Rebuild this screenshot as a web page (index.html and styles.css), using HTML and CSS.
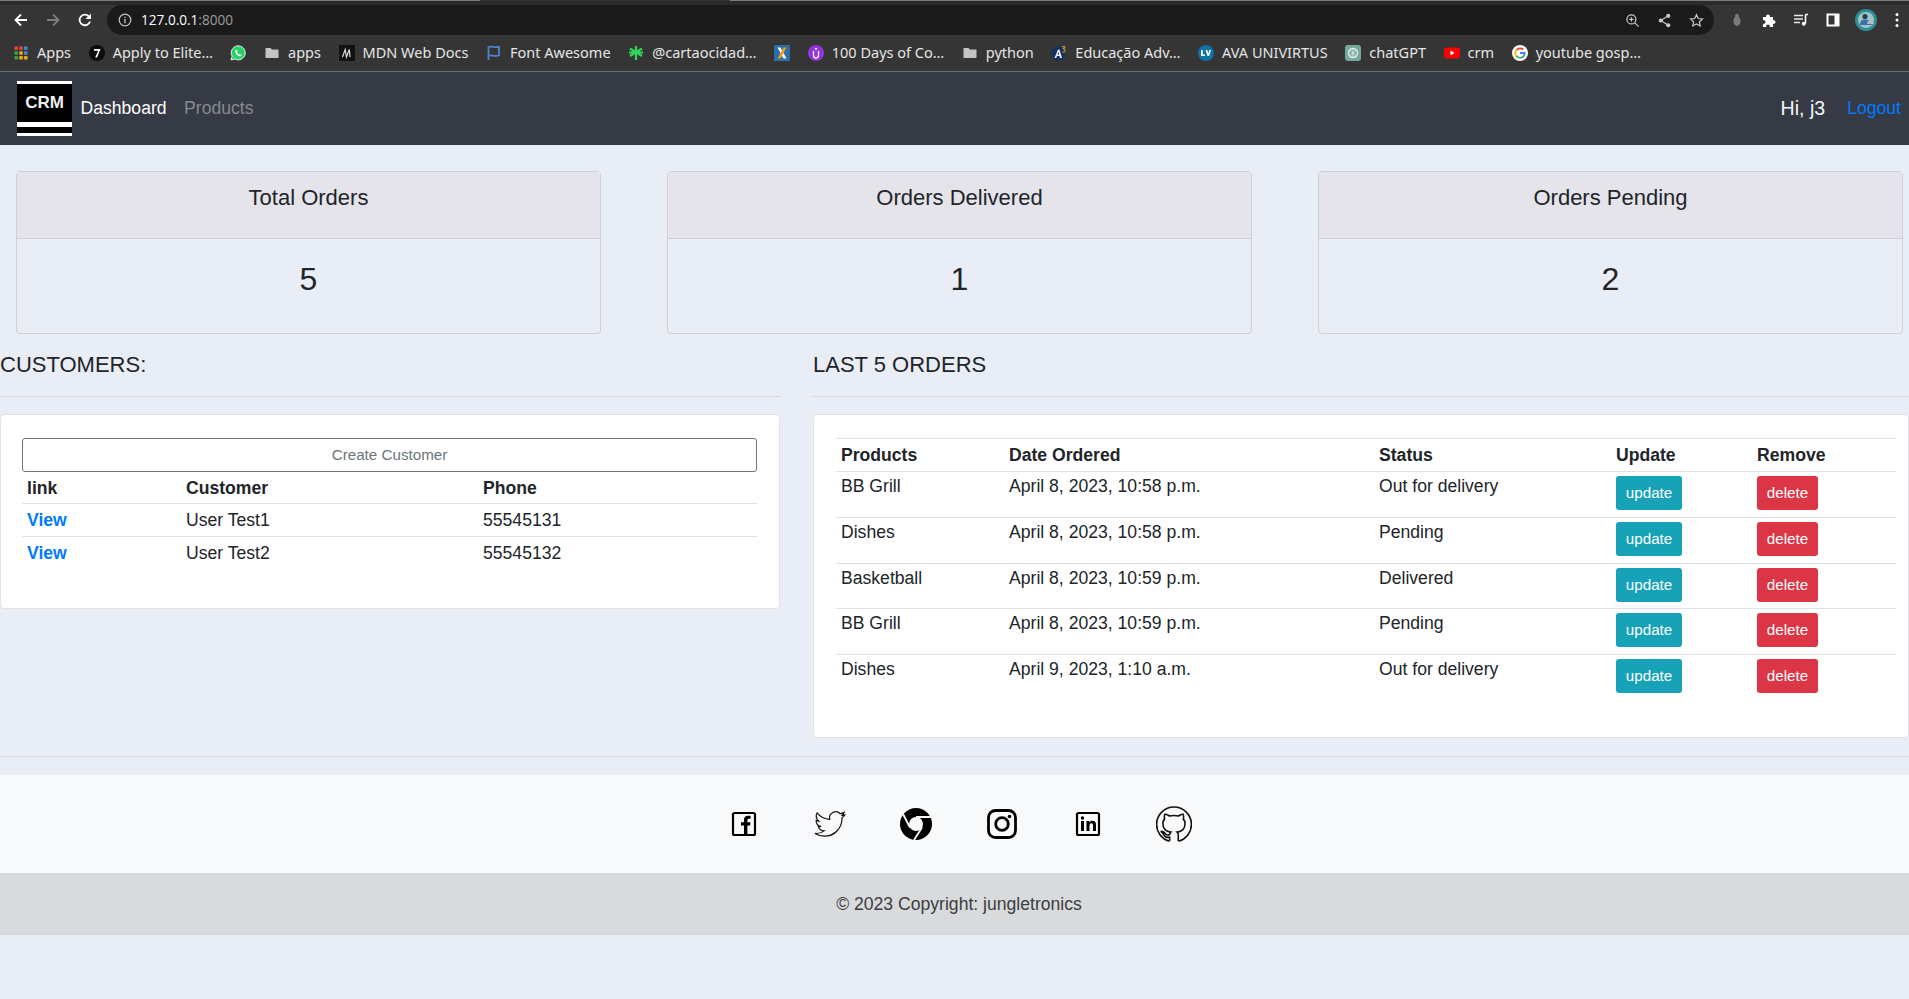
FILE: index.html
```html
<!DOCTYPE html>
<html lang="en">

  <head>
    <meta charset="UTF-8">
    <meta name="viewport" content="width=device-width, initial-scale=1.0">
    <title>CRM</title>
    <link rel="stylesheet" href="styles.css">
  </head>

  <body>
    <!-- browser window chrome -->
    <div class="tab-edge">
      <span class="edge-left"></span>
      <span class="edge-gap"></span>
      <span class="edge-right"></span>
    </div>
    <div class="toolbar">
      <div class="tool-buttons">
        <svg class="tool" viewBox="0 0 16 16"><path d="M14 8H3M8 2.500 2.500 8 8 13.500" fill="none" stroke="#fff" stroke-width="1.800"/></svg>
        <svg class="tool" viewBox="0 0 16 16"><path d="M2 8h11M8 2.500 13.500 8 8 13.500" fill="none" stroke="#7d7d7d" stroke-width="1.800"/></svg>
        <svg class="tool" viewBox="0 0 16 16"><path d="M13 9.500A5.300 5.300 0 1 1 11.800 4.300" fill="none" stroke="#fff" stroke-width="1.800"/><path d="M14 1.500V7H8.500z" fill="#fff"/></svg>
      </div>
      <div class="omnibox">
        <svg class="info" viewBox="0 0 14 14"><circle cx="7" cy="7" r="5.800" fill="none" stroke="#c8c8c8" stroke-width="1.200"/><path d="M7 6v4.200M7 3.800v1.200" stroke="#c8c8c8" stroke-width="1.300"/></svg>
        <span class="url">127.0.0.1<span class="url-port">:8000</span></span>
        <div class="omni-icons">
          <svg class="omni-icon" viewBox="0 0 16 16"><circle cx="6.800" cy="6.800" r="4.800" fill="none" stroke="#c8c8c8" stroke-width="1.300"/><path d="M10.300 10.300 14.500 14.500M4.500 6.800h4.600M6.800 4.500v4.600" stroke="#c8c8c8" stroke-width="1.300"/></svg>
          <svg class="omni-icon" viewBox="0 0 16 16"><path d="M12 3 4 8l8 5" fill="none" stroke="#c8c8c8" stroke-width="1.200"/><circle cx="12" cy="3" r="2.200" fill="#c8c8c8"/><circle cx="4" cy="8" r="2.200" fill="#c8c8c8"/><circle cx="12" cy="13" r="2.200" fill="#c8c8c8"/></svg>
          <svg class="omni-icon" viewBox="0 0 16 16"><path d="m8 1.800 1.900 4.100 4.500.5-3.300 3 .9 4.400L8 11.600l-4 2.200.9-4.400-3.300-3 4.500-.5z" fill="none" stroke="#c8c8c8" stroke-width="1.300"/></svg>
        </div>
      </div>
      <div class="ext-buttons">
        <svg class="ext-icon" viewBox="0 0 16 16"><ellipse cx="8" cy="9" rx="3.500" ry="5" fill="#7b7b7b"/><circle cx="8" cy="3.500" r="1.800" fill="#7b7b7b"/></svg>
        <svg class="ext-icon" viewBox="0 0 16 16"><path d="M2 5h3.200a1.900 1.900 0 1 1 3.600 0H12v3.200a1.900 1.900 0 1 1 0 3.600V15H8.800a1.900 1.900 0 1 0-3.600 0H2v-3.200a1.900 1.900 0 1 0 0-3.600z" fill="#fff"/></svg>
        <svg class="ext-icon" viewBox="0 0 16 16"><path d="M1 3.500h9M1 7h9M1 10.500h6" stroke="#e8e8e8" stroke-width="1.400"/><path d="M12.500 2.500v9" stroke="#fff" stroke-width="1.500"/><circle cx="10.800" cy="11.800" r="2" fill="#fff"/><path d="M12.500 2.500H15" stroke="#fff" stroke-width="1.500"/></svg>
        <svg class="ext-icon" viewBox="0 0 16 16"><rect x="1.500" y="1.500" width="13" height="13" fill="#fff"/><rect x="3.500" y="3.500" width="6" height="9" fill="#353535"/></svg>
        <svg class="avatar" viewBox="0 0 22 22"><circle cx="11" cy="11" r="11" fill="#2f8d95"/><circle cx="11" cy="11" r="8" fill="#9cc7c9"/><circle cx="10" cy="7.500" r="2.600" fill="#27424d"/><path d="M4.500 16c1-4.500 3-5.500 5.500-5.500s5 1 7 5.500z" fill="#3b73a8"/><path d="M12 15h7l-1-3h-5z" fill="#b9b9b9"/></svg>
        <svg class="menu-dots" viewBox="0 0 4 16"><circle cx="2" cy="2.500" r="1.500" fill="#fff"/><circle cx="2" cy="8" r="1.500" fill="#fff"/><circle cx="2" cy="13.500" r="1.500" fill="#fff"/></svg>
      </div>
    </div>
    <div class="bookmarks">
      <div class="bookmark">
        <svg class="bm-icon" viewBox="0 0 16 16">
          <rect x="1.500" y="1.500" width="3.400" height="3.400" fill="#e8453c"/><rect x="6.300" y="1.500" width="3.400" height="3.400" fill="#e8453c"/><rect x="11.100" y="1.500" width="3.400" height="3.400" fill="#4a89dc"/>
          <rect x="1.500" y="6.300" width="3.400" height="3.400" fill="#34a853"/><rect x="6.300" y="6.300" width="3.400" height="3.400" fill="#f4b400"/><rect x="11.100" y="6.300" width="3.400" height="3.400" fill="#4a89dc"/>
          <rect x="1.500" y="11.100" width="3.400" height="3.400" fill="#34a853"/><rect x="6.300" y="11.100" width="3.400" height="3.400" fill="#f4b400"/><rect x="11.100" y="11.100" width="3.400" height="3.400" fill="#f4b400"/>
        </svg>
        <span>Apps</span>
      </div>
      <div class="bookmark">
        <svg class="bm-icon" viewBox="0 0 16 16"><circle cx="8" cy="8" r="8" fill="#0c0c0c"/><path d="M5 4h6.500L8 12.500H6.200l3-6.700H5z" fill="#fff"/></svg>
        <span>Apply to Elite…</span>
      </div>
      <div class="bookmark">
        <svg class="bm-icon" viewBox="0 0 16 16"><path d="M1 15l1.100-3.800A7 7 0 1 1 4.900 14z" fill="#25d366" stroke="#fff" stroke-width=".9"/><path d="M5.800 4.600c-.8.700-1 1.900-.2 3.300.9 1.600 2.300 2.900 4 3.400 1 .2 1.900-.3 2.100-1.200l-1.700-1-.8.700c-.9-.4-1.600-1.100-2.100-2l.6-.9-.8-1.900z" fill="#fff"/></svg>
      </div>
      <div class="bookmark">
        <svg class="bm-icon" viewBox="0 0 16 16"><path d="M1.500 3h5l1.500 1.600h6.500V13h-13z" fill="#c4c4c4"/></svg>
        <span>apps</span>
      </div>
      <div class="bookmark">
        <svg class="bm-icon" viewBox="0 0 16 16"><rect width="16" height="16" fill="#111"/><path d="M3.500 12 6.200 4.500 7.500 12l2.800-7.500.7 7.500" fill="none" stroke="#ddd" stroke-width="1.200"/></svg>
        <span>MDN Web Docs</span>
      </div>
      <div class="bookmark">
        <svg class="bm-icon" viewBox="0 0 16 16"><path d="M2.500 15V2c3-1.500 5 1 10.500 0v8.500c-5 1.500-7.500-1-9.500.3" fill="none" stroke="#4a86cf" stroke-width="1.800"/></svg>
        <span>Font Awesome</span>
      </div>
      <div class="bookmark">
        <svg class="bm-icon" viewBox="0 0 16 16"><path d="M8 1v14M2 3.500l12 7.500M14 3.500 2 11M1 7.500h14" stroke="#33d45a" stroke-width="2.200"/></svg>
        <span>@cartaocidad…</span>
      </div>
      <div class="bookmark">
        <svg class="bm-icon" viewBox="0 0 16 16"><rect width="16" height="16" fill="#2a6fa8"/><path d="M3.500 2.500h3l6 11h-3z" fill="#fff"/><path d="M12.500 2.500h-3l-6 11h3z" fill="#f39a1e"/></svg>
      </div>
      <div class="bookmark">
        <svg class="bm-icon" viewBox="0 0 16 16"><circle cx="8" cy="8" r="8" fill="#9333dd"/><path d="M5.500 6v4.500a2.500 2.500 0 0 0 5 0V6" fill="none" stroke="#fff" stroke-width="1.300"/><circle cx="8" cy="3.800" r="1.100" fill="#fff"/></svg>
        <span>100 Days of Co…</span>
      </div>
      <div class="bookmark">
        <svg class="bm-icon" viewBox="0 0 16 16"><path d="M1.500 3h5l1.500 1.600h6.500V13h-13z" fill="#c4c4c4"/></svg>
        <span>python</span>
      </div>
      <div class="bookmark">
        <svg class="bm-icon" viewBox="0 0 16 16"><circle cx="7.500" cy="8.500" r="7" fill="#14305f"/><path d="M3.500 13 7 4.500h1.500L11 13H9l-.5-2H6l-.7 2zM6.600 9.500h1.600L7.500 7z" fill="#e8ecf4"/><path d="M11 1.500h3v1.500h-2v1h2V7h-3" fill="none" stroke="#d6a12c" stroke-width=".9"/></svg>
        <span>Educação Adv…</span>
      </div>
      <div class="bookmark">
        <svg class="bm-icon" viewBox="0 0 16 16"><circle cx="8" cy="8" r="8" fill="#0f73a8"/><path d="M3 5h1.800v4.500H7V11H3zM7.500 5h1.800l1 3.500 1-3.500H13l-1.900 6H9.500z" fill="#fff"/></svg>
        <span>AVA UNIVIRTUS</span>
      </div>
      <div class="bookmark">
        <svg class="bm-icon" viewBox="0 0 16 16"><rect width="16" height="16" rx="3" fill="#74aa9c"/><circle cx="8" cy="8" r="4.500" fill="none" stroke="#e6f0ed" stroke-width="1.400"/><path d="M5 5.500 11 10.500M11 5.500 5 10.500M8 3v10" stroke="#e6f0ed" stroke-width=".8"/></svg>
        <span>chatGPT</span>
      </div>
      <div class="bookmark">
        <svg class="bm-icon" viewBox="0 0 16 16"><rect y="2.500" width="16" height="11" rx="3" fill="#f00"/><path d="M6.500 5.500 10.500 8l-4 2.500z" fill="#fff"/></svg>
        <span>crm</span>
      </div>
      <div class="bookmark">
        <svg class="bm-icon" viewBox="0 0 16 16"><circle cx="8" cy="8" r="8" fill="#fff"/><path d="M4.500 5A4.800 4.800 0 0 1 11.300 4.500" fill="none" stroke="#ea4335" stroke-width="1.800"/><path d="M4.500 5a4.800 4.800 0 0 0 0 6" fill="none" stroke="#fbbc05" stroke-width="1.800"/><path d="M4.500 11a4.800 4.800 0 0 0 6.500.8" fill="none" stroke="#34a853" stroke-width="1.800"/><path d="M11 11.800A4.800 4.800 0 0 0 12.800 8H8" fill="none" stroke="#4285f4" stroke-width="1.800"/></svg>
        <span>youtube gosp…</span>
      </div>
    </div>

    <!-- the app -->
    <nav class="navbar">
      <div class="logo">
        <div class="logo-main">CRM</div>
        <div class="logo-gap"></div>
      </div>
      <a class="nav-link active" href="#">Dashboard</a>
      <a class="nav-link" href="#">Products</a>
      <span class="nav-user">Hi, j3</span>
      <a class="nav-logout" href="#">Logout</a>
    </nav>

    <div class="stats">
      <div class="stat-card">
        <div class="stat-title">Total Orders</div>
        <div class="stat-value">5</div>
      </div>
      <div class="stat-card">
        <div class="stat-title">Orders Delivered</div>
        <div class="stat-value">1</div>
      </div>
      <div class="stat-card">
        <div class="stat-title">Orders Pending</div>
        <div class="stat-value">2</div>
      </div>
    </div>

    <div class="columns">
      <section>
        <h5 class="section-title">CUSTOMERS:</h5>
        <hr class="section-line">
        <div class="panel panel-customers">
          <a class="btn-create" href="#">Create Customer</a>
          <table class="table table-customers">
            <tr>
              <th class="col-link">link</th>
              <th class="col-customer">Customer</th>
              <th>Phone</th>
            </tr>
            <tr>
              <td><a class="view-link" href="#">View</a></td>
              <td>User Test1</td>
              <td>55545131</td>
            </tr>
            <tr>
              <td><a class="view-link" href="#">View</a></td>
              <td>User Test2</td>
              <td>55545132</td>
            </tr>
          </table>
        </div>
      </section>

      <section>
        <h5 class="section-title">LAST 5 ORDERS</h5>
        <hr class="section-line">
        <div class="panel panel-orders">
          <table class="table table-orders">
            <tr>
              <th class="col-product">Products</th>
              <th class="col-date">Date Ordered</th>
              <th class="col-status">Status</th>
              <th class="col-update">Update</th>
              <th>Remove</th>
            </tr>
            <tr>
              <td>BB Grill</td>
              <td>April 8, 2023, 10:58 p.m.</td>
              <td>Out for delivery</td>
              <td><a class="btn btn-update" href="#">update</a></td>
              <td><a class="btn btn-delete" href="#">delete</a></td>
            </tr>
            <tr>
              <td>Dishes</td>
              <td>April 8, 2023, 10:58 p.m.</td>
              <td>Pending</td>
              <td><a class="btn btn-update" href="#">update</a></td>
              <td><a class="btn btn-delete" href="#">delete</a></td>
            </tr>
            <tr>
              <td>Basketball</td>
              <td>April 8, 2023, 10:59 p.m.</td>
              <td>Delivered</td>
              <td><a class="btn btn-update" href="#">update</a></td>
              <td><a class="btn btn-delete" href="#">delete</a></td>
            </tr>
            <tr>
              <td>BB Grill</td>
              <td>April 8, 2023, 10:59 p.m.</td>
              <td>Pending</td>
              <td><a class="btn btn-update" href="#">update</a></td>
              <td><a class="btn btn-delete" href="#">delete</a></td>
            </tr>
            <tr>
              <td>Dishes</td>
              <td>April 9, 2023, 1:10 a.m.</td>
              <td>Out for delivery</td>
              <td><a class="btn btn-update" href="#">update</a></td>
              <td><a class="btn btn-delete" href="#">delete</a></td>
            </tr>
          </table>
        </div>
      </section>
    </div>

    <hr class="footer-line">

    <footer>
      <div class="social">
        <svg class="social-icon" viewBox="0 0 36 36"><rect x="7" y="7" width="22" height="22" rx="1.500" fill="none" stroke="#000" stroke-width="2.200"/><path d="M18 29v-9.500h-3v-3.200h3V14c0-2.800 1.600-4.200 4-4.200h2.600v3H23c-1.100 0-1.600.6-1.600 1.600v1.900h3.100l-.4 3.200h-2.700V29z" fill="#000"/></svg>
        <svg class="social-icon" viewBox="0 0 36 36"><path transform="translate(3 3) scale(1.25)" d="M23.953 4.570a10 10 0 0 1-2.825.775 4.958 4.958 0 0 0 2.163-2.723c-.951.555-2.005.959-3.127 1.184a4.920 4.920 0 0 0-8.384 4.482C7.690 8.095 4.067 6.130 1.640 3.162a4.822 4.822 0 0 0-.666 2.475c0 1.710.870 3.213 2.188 4.096a4.904 4.904 0 0 1-2.228-.616v.060a4.923 4.923 0 0 0 3.946 4.827 4.996 4.996 0 0 1-2.212.085 4.936 4.936 0 0 0 4.604 3.417 9.867 9.867 0 0 1-6.102 2.105c-.390 0-.779-.023-1.170-.067a13.995 13.995 0 0 0 7.557 2.209c9.053 0 13.998-7.496 13.998-13.985 0-.210 0-.420-.015-.630A9.935 9.935 0 0 0 24 4.590z" fill="none" stroke="#111" stroke-width=".95"/></svg>
        <svg class="social-icon" viewBox="0 0 36 36"><circle cx="18" cy="18" r="16" fill="#000"/><path d="M18 11h15M12 21.500 5 8M24 21.500 16 34" stroke="#f8f9fa" stroke-width="1.800"/><circle cx="18" cy="18" r="7" fill="#f8f9fa"/></svg>
        <svg class="social-icon" viewBox="0 0 36 36"><rect x="4.500" y="4.500" width="27" height="27" rx="7" fill="none" stroke="#000" stroke-width="2.800"/><circle cx="18" cy="18" r="6.300" fill="none" stroke="#000" stroke-width="2.800"/><circle cx="25.500" cy="10.500" r="1.800" fill="#000"/></svg>
        <svg class="social-icon" viewBox="0 0 36 36"><rect x="7" y="7" width="22" height="22" rx="1.500" fill="none" stroke="#000" stroke-width="2.200"/><rect x="11" y="15" width="3" height="10" fill="#000"/><circle cx="12.500" cy="12" r="1.700" fill="#000"/><path d="M16.500 15h2.800v1.400c.7-1 1.800-1.700 3.200-1.700 2.800 0 3.500 1.800 3.500 4.300v6h-3v-5.400c0-1.300-.3-2.300-1.600-2.300-1.400 0-1.900 1-1.900 2.300V25h-3z" fill="#000"/></svg>
        <svg class="social-icon" viewBox="0 0 36 36"><path transform="translate(.6 .6) scale(1.450)" d="M12 .297c-6.630 0-12 5.373-12 12 0 5.303 3.438 9.800 8.205 11.385.6.113.82-.258.82-.577 0-.285-.01-1.040-.015-2.040-3.338.724-4.042-1.610-4.042-1.610C4.422 18.070 3.633 17.700 3.633 17.700c-1.087-.744.084-.729.084-.729 1.205.084 1.838 1.236 1.838 1.236 1.070 1.835 2.809 1.305 3.495.998.108-.776.417-1.305.76-1.605-2.665-.3-5.466-1.332-5.466-5.930 0-1.310.465-2.380 1.235-3.220-.135-.303-.54-1.523.105-3.176 0 0 1.005-.322 3.300 1.230.96-.267 1.980-.399 3-.405 1.020.006 2.040.138 3 .405 2.280-1.552 3.285-1.230 3.285-1.230.645 1.653.24 2.873.12 3.176.765.84 1.230 1.910 1.230 3.220 0 4.610-2.805 5.625-5.475 5.920.42.36.81 1.096.81 2.220 0 1.606-.015 2.896-.015 3.286 0 .315.21.69.825.57C20.565 22.092 24 17.592 24 12.297c0-6.627-5.373-12-12-12" fill="none" stroke="#111" stroke-width="1.100"/></svg>
      </div>
      <div class="copyright">© 2023 Copyright: jungletronics</div>
    </footer>
  </body>

</html>
```

FILE: styles.css
```css
* {
  box-sizing: border-box;
}

html,
body {
  overflow: hidden;
}

body {
  margin: 0;
  height: 999px;
  background-color: #e9edf5;
  color: #212529;
  font-family: "Liberation Sans", Arial, sans-serif;
  font-size: 17.6px;
  line-height: 1.5;
}

a {
  text-decoration: none;
}

/* browser chrome */
.tab-edge {
  display: flex;
  height: 5px;
  background-color: #353535;
  border-bottom: 4px solid #2a2a2a;
}

.edge-left {
  width: 480px;
  height: 1px;
  background-color: #7a7a7a;
}

.edge-gap {
  width: 250px;
}

.edge-right {
  flex: 1;
  height: 1px;
  background-color: #7a7a7a;
}

.toolbar {
  display: flex;
  align-items: center;
  height: 30px;
  background-color: #353535;
}

.tool-buttons {
  display: flex;
  gap: 16px;
  width: 107px;
  padding-left: 13px;
}

.tool {
  width: 16px;
  height: 16px;
}

.omnibox {
  display: flex;
  align-items: center;
  width: 1607px;
  height: 30px;
  padding-left: 11px;
  padding-right: 10px;
  background-color: #1a1a1a;
  border-radius: 15px;
}

.info {
  width: 14px;
  height: 14px;
  margin-right: 9px;
}

.url {
  color: #fff;
  font-family: "Open Sans", sans-serif;
  font-size: 13.6px;
}

.url-port {
  color: #9b9b9b;
}

.omni-icons {
  display: flex;
  gap: 17px;
  margin-left: auto;
}

.omni-icon {
  width: 15px;
  height: 15px;
}

.ext-buttons {
  display: flex;
  align-items: center;
  gap: 16px;
  padding-left: 15px;
}

.ext-icon {
  width: 16px;
  height: 16px;
}

.avatar {
  width: 22px;
  height: 22px;
  margin-left: -2px;
}

.menu-dots {
  width: 4px;
  height: 16px;
  margin-left: 2px;
}

.bookmarks {
  display: flex;
  align-items: center;
  gap: 17.6px;
  height: 37px;
  padding-left: 13px;
  padding-bottom: 1px;
  background-color: #353535;
  border-bottom: 1px solid #6a6a6a;
  color: #e6e6e6;
  font-family: "Noto Sans", sans-serif;
  font-size: 14.5px;
  white-space: nowrap;
}

.bookmark {
  display: flex;
  align-items: center;
  gap: 8px;
}

.bm-icon {
  width: 16px;
  height: 16px;
}

/* navbar */
.navbar {
  display: flex;
  align-items: center;
  height: 73px;
  padding-left: 17px;
  padding-right: 8px;
  background-color: #353a44;
  font-size: 17.6px;
}

.logo {
  width: 55px;
  height: 55px;
  background-color: #000;
  border-top: 3px solid #fff;
  border-bottom: 3px solid #fff;
}

.logo-main {
  height: 38px;
  padding-top: 7px;
  color: #eee;
  font-size: 17px;
  font-weight: bold;
  line-height: 24px;
  text-align: center;
}

.logo-gap {
  height: 6px;
  box-sizing: content-box;
  border-top: 5px solid #fff;
}

.nav-link {
  margin-left: 8.5px;
  margin-right: 9px;
  color: #868a90;
}

.nav-link.active {
  color: #fff;
}

.nav-user {
  margin-left: auto;
  color: #f4f6fa;
  font-size: 19.6px;
}

.nav-logout {
  margin-left: 22px;
  color: #007bff;
  font-size: 17.6px;
}

/* stat cards */
.stats {
  display: grid;
  grid-template-columns: 585px 585px 585px;
  column-gap: 66px;
  padding-top: 26px;
  padding-left: 16px;
}

.stat-card {
  height: 163px;
  border: 1px solid #cfd0d5;
  border-radius: 4px;
}

.stat-title {
  height: 67px;
  padding-top: 9px;
  background-color: #e4e4ea;
  border-bottom: 1px solid #cfd0d5;
  font-size: 22px;
  text-align: center;
}

.stat-value {
  padding-top: 16px;
  font-size: 32px;
  text-align: center;
}

/* customer and order sections */
.columns {
  display: grid;
  grid-template-columns: 780px 1096px;
  column-gap: 33px;
  align-items: start;
  padding-top: 16px;
}

.section-title {
  margin: 0;
  height: 46px;
  font-size: 22px;
  font-weight: 400;
  line-height: 30px;
}

.section-line {
  margin: 0 0 17px;
  border: 0;
  border-top: 1px solid #d3d6dc;
}

.panel {
  background-color: #fff;
  border: 1px solid #e0e2e6;
  border-radius: 4px;
}

.panel-customers {
  height: 195px;
  padding: 23px 22px 0 21px;
}

.panel-orders {
  height: 324px;
  padding: 23px 12px 0 22px;
}

.btn-create {
  display: block;
  height: 34px;
  border: 1px solid #6c757d;
  border-radius: 3px;
  color: #6c757d;
  font-size: 15.2px;
  line-height: 32px;
  text-align: center;
}

.table {
  width: 100%;
  border-collapse: collapse;
  table-layout: fixed;
}

.table th {
  font-size: 17.6px;
  font-weight: bold;
  text-align: left;
}

.table th,
.table td {
  vertical-align: top;
  border-bottom: 1px solid #dee2e6;
}

.table-customers th,
.table-customers td {
  padding: 3px 5px 2px;
}

.table-customers tr:last-child td {
  border-bottom: 0;
}

.col-link {
  width: 159px;
}

.col-customer {
  width: 297px;
}

.table-orders {
  border-top: 1px solid #dee2e6;
}

.table-orders th {
  padding: 3px 5px;
}

.table-orders td {
  height: 45.6px;
  padding: 0 5px;
  padding-top: 1px;
}

.table-orders tr:last-child td {
  border-bottom: 0;
}

.col-product {
  width: 168px;
}

.col-date {
  width: 370px;
}

.col-status {
  width: 237px;
}

.col-update {
  width: 141px;
}

.view-link {
  color: #007bff;
  font-weight: bold;
}

.btn {
  display: inline-block;
  height: 34px;
  margin-top: 3px;
  padding: 0 9.8px;
  border-radius: 3px;
  color: #fff;
  font-size: 15.2px;
  line-height: 33px;
}

.btn-update {
  background-color: #17a2b8;
}

.btn-delete {
  background-color: #dc3545;
}

/* footer */
.footer-line {
  margin: 0;
  margin-top: 18px;
  border: 0;
  border-top: 1px solid #d3d6dc;
}

footer {
  margin-top: 18px;
}

.social {
  display: flex;
  justify-content: center;
  align-items: center;
  height: 98px;
  padding-left: 9px;
  background-color: #f8f9fa;
}

.social-icon {
  width: 36px;
  height: 36px;
  margin: 0 25px;
}

.copyright {
  height: 62px;
  padding-left: 9px;
  background-color: #d9dadc;
  color: #3a3d41;
  line-height: 62px;
  text-align: center;
}
```
